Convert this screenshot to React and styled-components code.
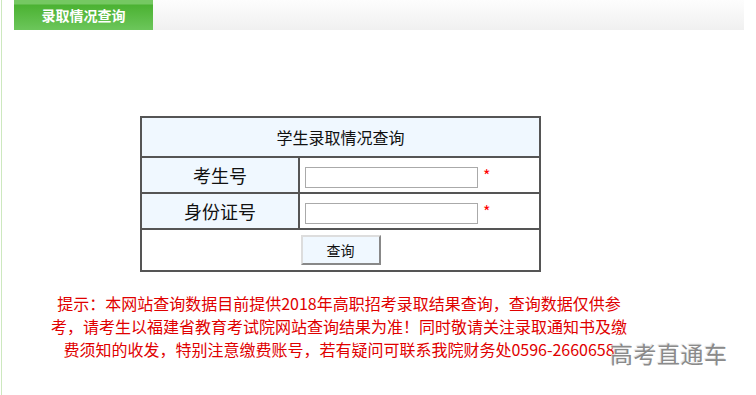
import React from 'react'
import styled, { createGlobalStyle } from 'styled-components'

const GlobalStyle = createGlobalStyle`
body {
  margin: 0;
  background: #fff;
  font-family: "Noto Sans CJK SC", "Liberation Sans", sans-serif;
}
`

const Page = styled.div`
position: relative;
width: 755px;
height: 395px;
margin-left: 1px;
border-left: 1px solid #cde8bf;
box-sizing: border-box;
overflow: hidden;
`

const Header = styled.div`
display: flex;
padding-left: 12px;
width: 742px;
box-sizing: border-box;
height: 30px;
`

const Tab = styled.div`
width: 139px;
height: 30px;
display: flex;
align-items: center;
justify-content: center;
color: #fff;
font-size: 14px;
font-weight: bold;
background: linear-gradient(#75c862 0, #75c862 4px, #4bb232 5px, #6cc65b 100%);
`

const HeaderFill = styled.div`
flex: 1;
height: 30px;
background: linear-gradient(#fdfdfd, #f0f0f0);
`

const Body = styled.div`
display: flex;
flex-direction: column;
align-items: flex-start;
padding-top: 86px;
padding-left: 138px;
`

const Table = styled.table`
border-collapse: collapse;
width: 401px;
border: 2px solid #555;
`

const Cell = styled.td`
border: 2px solid #555;
padding: 0;
background: ${p => (p.$shade ? '#f0f8ff' : '#fff')};
text-align: ${p => (p.$left ? 'left' : 'center')};
font-size: ${p => p.$size || 18}px;
color: #111;
height: ${p => p.$h}px;
`

const Input = styled.input`
width: 173px;
height: 21px;
box-sizing: border-box;
border: 1px solid #aaa;
margin-left: 5px;
vertical-align: middle;
`

const Star = styled.span`
color: #f00;
font-size: 16px;
margin-left: 5px;
vertical-align: 1px;
`

const Button = styled.button`
width: 80px;
height: 30px;
background: #f0f8ff;
border: 2px solid;
border-color: #ddd #888 #888 #ddd;
font-family: inherit;
font-size: 14px;
color: #111;
padding: 0;
`

const Notice = styled.p`
margin: 20px 0 0 -96px;
width: 590px;
text-align: center;
color: #e00000;
font-size: 16px;
line-height: 23px;
`

const Watermark = styled.div`
position: absolute;
left: 608px;
top: 336px;
font-size: 23px;
color: #8a8a8a;
letter-spacing: 0.5px;
text-shadow: 1px 1px 1px #fff, -1px -1px 1px #ddd;
`

const App = () => {
  return (
    <Page>
      <GlobalStyle />
      <Header>
        <Tab>录取情况查询</Tab>
        <HeaderFill />
      </Header>
      <Body>
        <Table>
          <tbody>
            <tr>
              <Cell colSpan={2} $shade $size={16} $h={38}>学生录取情况查询</Cell>
            </tr>
            <tr>
              <Cell $shade $h={34} style={{ width: 156 }}>考生号</Cell>
              <Cell $left $h={34}><Input /><Star>*</Star></Cell>
            </tr>
            <tr>
              <Cell $shade $h={34}>身份证号</Cell>
              <Cell $left $h={34}><Input /><Star>*</Star></Cell>
            </tr>
            <tr>
              <Cell colSpan={2} $h={40}><Button>查询</Button></Cell>
            </tr>
          </tbody>
        </Table>
        <Notice>
          提示：本网站查询数据目前提供2018年高职招考录取结果查询，查询数据仅供参<br />
          考，请考生以福建省教育考试院网站查询结果为准！同时敬请关注录取通知书及缴<br />
          费须知的收发，特别注意缴费账号，若有疑问可联系我院财务处0596-2660658
        </Notice>
      </Body>
      <Watermark>高考直通车</Watermark>
    </Page>
  )
}

export default App
